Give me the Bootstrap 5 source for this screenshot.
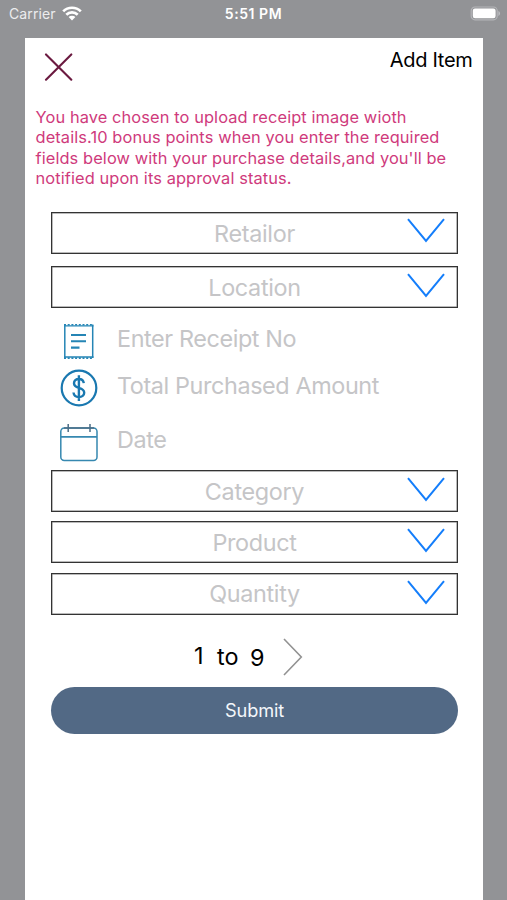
<!DOCTYPE html>
<html lang="en">
<head>
<meta charset="utf-8">
<meta name="viewport" content="width=device-width, initial-scale=1">
<title>Add Item</title>
<link href="https://cdn.jsdelivr.net/npm/bootstrap@5.3.0/dist/css/bootstrap.min.css" rel="stylesheet">
<style>
  body { background: #929396; font-family: Inter, "Liberation Sans", sans-serif; color: #000; height: 900px; overflow: hidden; }
  svg { display: block; flex: none; fill: none; }
  .statusbar { height: 38px; color: #fff; font-size: 14px; line-height: 28px; padding: 0 6px 0 9px; }
  .statusbar > div { height: 28px; }
  .statusbar .gap-2 { gap: 6px !important; }
  .carrier { color: #ececee; letter-spacing: .1px; }
  .clock { font-weight: 600; font-size: 14px; letter-spacing: .55px; white-space: nowrap; }
  .sheet { margin: 0 24.5px 0 25px; height: 862px; }
  .sheet-head { height: 69px; padding: 15px 10px 0 19px; }
  .sheet-title { font-size: 20px; line-height: 24px; letter-spacing: -.3px; margin-top: -5px; }
  .notice { color: #cf3a7c; font-size: 16.4px; line-height: 20.3px; letter-spacing: .1px; margin: 0 0 0 10.5px; height: 105px; white-space: nowrap; }
  .fields { margin: 0 24.5px 0 26px; }
  .picker { height: 42px; border: 1px solid #333; box-shadow: inset 0 0 0 .5px #777; color: #c5c5c7; background: #fff; font-size: 23.4px; letter-spacing: -.33px; line-height: 39px; padding: 0; text-align: center; position: relative; border-radius: 0; display: block; width: 100%; margin-top: 9.3px; }
  .picker svg { position: absolute; right: 11px; top: 5px; }
  .picker.retailer { margin-top: 0; }
  .picker.retailer svg { top: 4px; }
  .picker.location { margin-top: 12px; }
  .picker.category { margin-top: 6.5px; }
  .entry { color: #c5c5c7; font-size: 23.4px; letter-spacing: -.4px; line-height: 28px; padding-left: 8px; gap: 18px; }
  .entry svg { width: 40px; height: 42px; }
  .entry span { margin-bottom: 4px; }
  .entry.receipt { margin-top: 12px; }
  .entry.amount { margin-top: 5px; }
  .entry.date { margin-top: 12.5px; }
  .entry.date span { margin-bottom: 5px; }
  .range { font-size: 23.4px; line-height: 28px; height: 72.2px; padding: 23.5px 0 0 143px; }
  .range .first { margin-top: 4px; }
  .range .dash { margin: 5px 11.5px 0 13.5px; }
  .range .last { margin: 6px 19px 0 0; }
  .submit { height: 47px; background: #526985; color: #f4f7fb; font-size: 18.2px; letter-spacing: -.15px; line-height: 47px; padding: 0; border: 0; }
</style>
</head>
<body>
<header class="statusbar d-flex justify-content-between position-relative">
  <div class="d-flex align-items-center gap-2">
    <span class="carrier">Carrier</span>
    <svg width="20" height="16" viewBox="0 0 20 16"><g stroke="#fff" stroke-width="2.7"><path d="M1.2 5.4a12.4 12.4 0 0 1 17.6 0M4.3 8.7a8 8 0 0 1 11.4 0"/></g><path d="M6.6 11.1a4.8 4.8 0 0 1 6.8 0L10 14.6z" fill="#fff"/></svg>
  </div>
  <div class="clock position-absolute start-50 translate-middle-x">5:51 PM</div>
  <div class="d-flex align-items-center">
    <svg width="31" height="16" viewBox="0 0 31 16"><rect x="1.2" y="1" width="26" height="12.8" rx="3.8" stroke="#b4b5b8" stroke-width="1.2"/><rect x="2.8" y="2.6" width="22.8" height="9.6" rx="2.2" fill="#fff"/><path d="M28.4 5.1c2.2.8 2.2 4 0 4.8z" fill="#bbbcbf"/></svg>
  </div>
</header>
<main class="sheet bg-white">
  <div class="sheet-head d-flex justify-content-between align-items-start">
    <svg width="29" height="29" viewBox="0 0 29 29" role="button" aria-label="Close"><path d="M2 1.4 27.3 26.7M27.3 1.4 2 26.7" stroke="#6b1a40" stroke-width="2.1" stroke-linecap="round"/></svg>
    <h1 class="sheet-title mb-0 fw-normal">Add Item</h1>
  </div>
  <p class="notice">You have chosen to upload receipt image wioth<br>details.10 bonus points when you enter the required<br>fields below with your purchase details,and you'll be<br>notified upon its approval status.</p>
  <form class="fields">
    <button type="button" class="picker retailer">Retailor<svg width="40" height="27" viewBox="0 0 40 27"><path d="M2 2.2 20 24 38 2.2" stroke="#147efb" stroke-width="2"/></svg></button>
    <button type="button" class="picker location">Location<svg width="40" height="27" viewBox="0 0 40 27"><path d="M2 2.2 20 24 38 2.2" stroke="#147efb" stroke-width="2"/></svg></button>
    <div class="entry receipt d-flex align-items-center">
      <svg viewBox="0 0 40 42" stroke="#2585b5"><path d="M5.8 4.5V38M33.7 4.5V38" stroke-width="1.5"/><path d="M5 5.8H34.5M5 37H34.5" stroke-width="1.3"/><path d="M5 4.7H34.5M5 38.1H34.5" stroke-width="1.6" stroke-dasharray="2 1.7"/><path d="M12 15H27M12 21.3H27M12 27.6H20.5" stroke-width="2.1"/></svg>
      <span>Enter Receipt No</span>
    </div>
    <div class="entry amount d-flex align-items-center">
      <svg viewBox="0 0 40 42" stroke="#1a78b0"><circle cx="20" cy="21" r="17.3" stroke-width="2.2"/><path d="M19.9 8.2V34M24.8 16.2C24.4 13.4 22.8 12 19.9 12c-3 0-4.9 1.7-4.9 4.3 0 2.8 2.1 3.8 4.9 4.6 3.1.9 5.3 2 5.3 4.8 0 2.6-2.2 4.3-5.3 4.3-3 0-5.1-1.6-5.4-4.5" stroke-width="2.4"/></svg>
      <span>Total Purchased Amount</span>
    </div>
    <div class="entry date d-flex align-items-center">
      <svg viewBox="0 0 40 42"><rect x="1.8" y="6" width="36.2" height="32.5" rx="3.5" stroke="#3688b0" stroke-width="1.5"/><path d="M2 14.8H38" stroke="#3688b0" stroke-width="1.7"/><path d="M5 6H35M9.2 2V10M31 2V10" stroke="#4b6d86" stroke-width="1.5"/></svg>
      <span>Date</span>
    </div>
    <button type="button" class="picker category">Category<svg width="40" height="27" viewBox="0 0 40 27"><path d="M2 2.2 20 24 38 2.2" stroke="#147efb" stroke-width="2"/></svg></button>
    <button type="button" class="picker">Product<svg width="40" height="27" viewBox="0 0 40 27"><path d="M2 2.2 20 24 38 2.2" stroke="#147efb" stroke-width="2"/></svg></button>
    <button type="button" class="picker">Quantity<svg width="40" height="27" viewBox="0 0 40 27"><path d="M2 2.2 20 24 38 2.2" stroke="#147efb" stroke-width="2"/></svg></button>
    <div class="range d-flex align-items-start">
      <span class="first">1</span><span class="dash">to</span><span class="last">9</span>
      <svg width="20" height="38" viewBox="0 0 20 38"><path d="M1 1 18.3 19 1 37" stroke="#929292" stroke-width="1.6"/></svg>
    </div>
    <button type="button" class="submit btn rounded-pill w-100 d-block">Submit</button>
  </form>
</main>
<script src="https://cdn.jsdelivr.net/npm/bootstrap@5.3.0/dist/js/bootstrap.bundle.min.js"></script>
</body>
</html>
